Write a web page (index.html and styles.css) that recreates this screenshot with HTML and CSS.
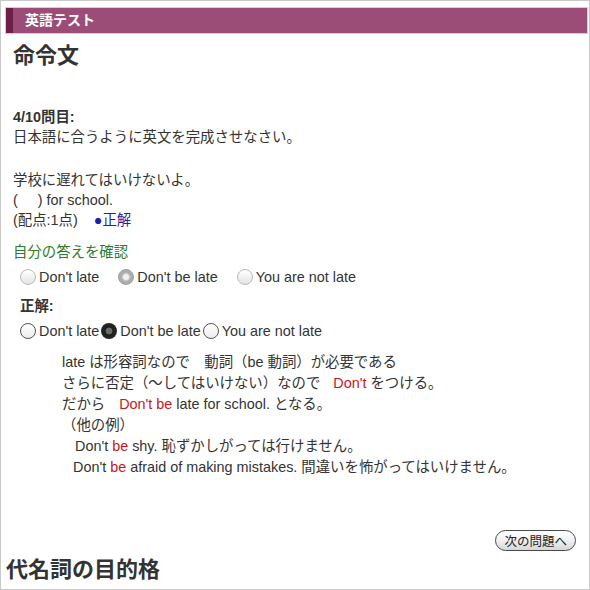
FILE: index.html
```html
<!DOCTYPE html>
<html lang="ja">
<head>
<meta charset="utf-8">
<title>英語テスト</title>
<link rel="stylesheet" href="styles.css">
</head>
<body>
<div class="page">
  <div class="bar">英語テスト</div>
  <h1 class="title">命令文</h1>

  <div class="question">
    <p class="qnum">4/10問目:</p>
    <p>日本語に合うように英文を完成させなさい。</p>
    <p class="sentence">学校に遅れてはいけないよ。<br>(&nbsp;&nbsp;&nbsp;&nbsp;&nbsp;) for school.<br>(配点:1点)<span class="correct-mark">●正解</span></p>
  </div>

  <p class="check">自分の答えを確認</p>
  <div class="choices spaced">
    <span class="choice"><span class="radio dis"></span>Don't late</span>
    <span class="choice"><span class="radio dis on"></span>Don't be late</span>
    <span class="choice"><span class="radio dis"></span>You are not late</span>
  </div>

  <p class="answer-label">正解:</p>
  <div class="choices tight">
    <span class="choice"><span class="radio"></span>Don't late</span>
    <span class="choice"><span class="radio on"></span>Don't be late</span>
    <span class="choice"><span class="radio"></span>You are not late</span>
  </div>

  <div class="explain">
    <p>late は形容詞なので　動詞（be 動詞）が必要である</p>
    <p>さらに否定（〜してはいけない）なので<span class="red gap">Don't</span> をつける。</p>
    <p>だから<span class="red gap2">Don't be</span> late for school. となる。</p>
    <p>（他の例）</p>
    <p class="ex1">Don't <span class="red">be</span> shy. 恥ずかしがっては行けません。</p>
    <p class="ex2">Don't <span class="red">be</span> afraid of making mistakes. 間違いを怖がってはいけません。</p>
  </div>

  <div class="next-row"><button class="next">次の問題へ</button></div>
  <h2 class="title2">代名詞の目的格</h2>
</div>
</body>
</html>
```
FILE: styles.css
```css
html, body {
  margin: 0;
  padding: 0;
  background: #fff;
}
body {
  font-family: "Liberation Sans", Arial, "Noto Sans CJK JP", sans-serif;
  font-size: 14.4px;
  color: #333;
}
p { margin: 0; }

.page {
  width: 590px;
  height: 590px;
  box-sizing: border-box;
  border: 1px solid #c9c9c9;
  overflow: hidden;
}

.bar {
  margin: 6px 1px 0 4px;
  height: 27px;
  box-sizing: border-box;
  border: 1px solid #e6c3d5;
  background: #9b4d78;
  box-shadow: inset 7px 0 0 #6d1f48;
  color: #fff;
  font-size: 14px;
  font-weight: bold;
  line-height: 25px;
  padding-left: 19px;
}

.title {
  margin: 7px 0 0 12px;
  font-size: 22px;
  line-height: 30px;
  font-weight: bold;
  color: #333;
}

.question {
  margin: 36px 0 0 12px;
  line-height: 20px;
}
.qnum { font-weight: bold; }
.sentence { margin-top: 23px; }
.correct-mark {
  color: #1f1fa8;
  margin-left: 16px;
}

.check {
  margin: 12px 0 0 12px;
  line-height: 20px;
  color: #2e7a2e;
}

.choices {
  display: flex;
  align-items: center;
  margin-left: 19px;
  height: 20px;
  line-height: 20px;
}
.spaced { margin-top: 5px; gap: 19px; }
.tight { margin-top: 5px; gap: 2px; }

.choice {
  display: flex;
  align-items: center;
  gap: 3px;
}

.radio {
  width: 16px;
  height: 16px;
  box-sizing: border-box;
  border-radius: 50%;
  border: 1px solid #555;
  background: linear-gradient(#ffffff, #ededed);
  flex: none;
}
.radio.on {
  border: none;
  background: radial-gradient(circle, #6a6a6a 0 3px, #1e1e1e 3.8px, #2a2a2a 100%);
}
.radio.dis {
  border-color: #b9b9b9;
  background: linear-gradient(#ffffff, #e4e4e4);
}
.radio.dis.on {
  border: 1px solid #9c9c9c;
  background: radial-gradient(circle, #f2f2f2 0 2.5px, #d0d0d0 3.2px, #a9a9a9 5px, #bdbdbd 100%);
}

.answer-label {
  margin: 9px 0 0 19px;
  line-height: 20px;
  font-weight: bold;
}

.explain {
  margin: 11px 0 0 61px;
  line-height: 21px;
}
.red { color: #c8161d; }
.gap { margin-left: 13px; }
.gap2 { margin-left: 14px; }
.ex1 { padding-left: 13px; }
.ex2 { padding-left: 11px; }

.next-row {
  display: flex;
  justify-content: flex-end;
  margin: 52px 13px 0 0;
}
.next {
  height: 21px;
  box-sizing: border-box;
  padding: 0 8px;
  border: 1px solid #4a4a4a;
  border-radius: 11px;
  background: linear-gradient(#ffffff, #f3f3f3 45%, #d6d6d6);
  font-family: "Noto Sans CJK JP", sans-serif;
  font-size: 12.5px;
  line-height: 19px;
  color: #222;
}

.title2 {
  margin: 4px 0 0 5px;
  font-size: 22px;
  line-height: 30px;
  font-weight: bold;
  color: #333;
}
```
